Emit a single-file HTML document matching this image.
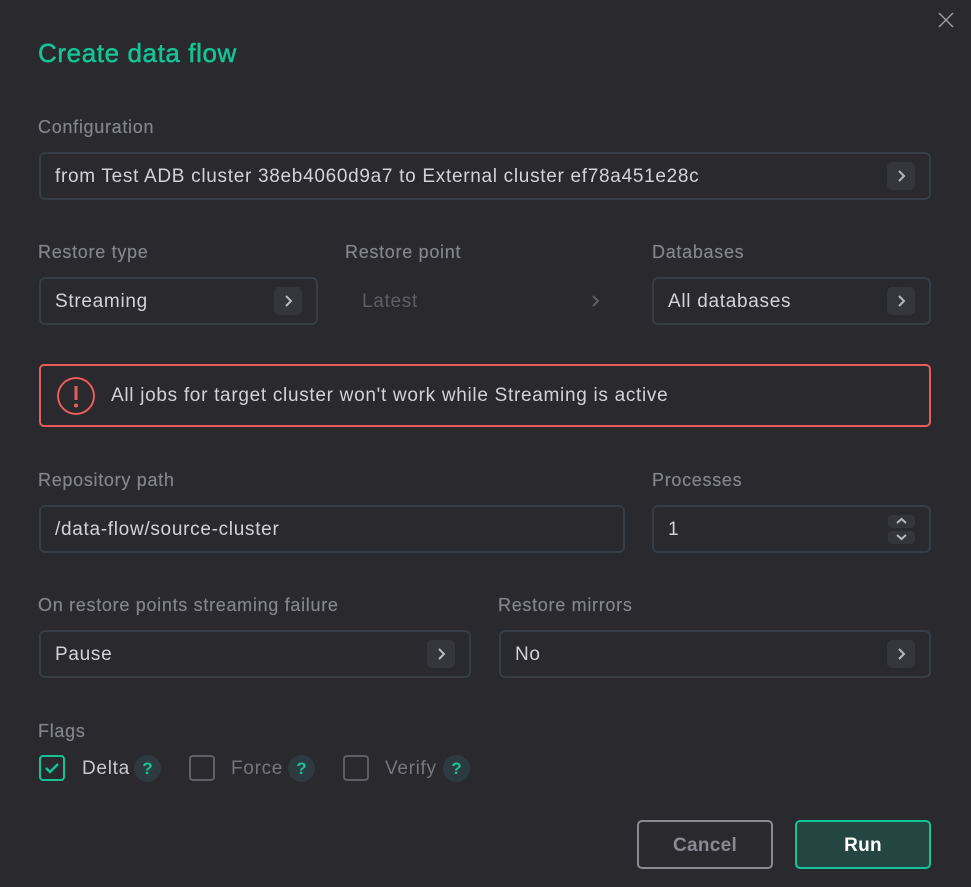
<!DOCTYPE html>
<html><head><meta charset="utf-8"><style>
*{box-sizing:border-box;margin:0;padding:0}
body{width:971px;height:887px;background:#29292e;font-family:"Liberation Sans",sans-serif;position:relative;overflow:hidden;color:#d2d2d8;letter-spacing:0.7px}
.a{position:absolute}
.lbl{position:absolute;font-size:18px;color:#83858b;line-height:20px;-webkit-text-stroke:0.2px #83858b}
.f{position:absolute;height:48px;border:2px solid #363d44;border-radius:6px;font-size:19px;line-height:46px;padding-left:14px;color:#d2d2d8}
.ch{position:absolute;right:14px;top:8px;width:28px;height:28px;background:#35363b;border-radius:5px}
.ch svg,.sp svg{position:absolute;left:0;top:0}
.cb{position:absolute;width:26px;height:26px;border:2px solid #5e5f64;border-radius:4px;top:755px}
.q{position:absolute;width:27px;height:27px;border-radius:50%;background:#2d3a40;color:#13c596;font-weight:bold;font-size:17px;text-align:center;line-height:27px;top:755px;letter-spacing:0}
.fl{position:absolute;top:758px;font-size:19px;line-height:22px;color:#76777c}
</style></head><body>
<svg class="a" style="left:937px;top:11px" width="18" height="18"><path d="M2 2L16 16M16 2L2 16" stroke="#9a9aa0" stroke-width="1.5"/></svg>
<div class="a" style="left:38px;top:38px;font-size:26px;color:#13c596;line-height:30px;letter-spacing:0.6px;-webkit-text-stroke:0.5px #13c596">Create data flow</div>

<div class="lbl" style="left:38px;top:117px">Configuration</div>
<div class="f" style="left:39px;top:152px;width:892px">from Test ADB cluster 38eb4060d9a7 to External cluster ef78a451e28c<div class="ch"><svg width="28" height="28"><path d="M12 9l5 5-5 5" fill="none" stroke="#b8b8be" stroke-width="2"/></svg></div></div>

<div class="lbl" style="left:38px;top:242px">Restore type</div>
<div class="lbl" style="left:345px;top:242px">Restore point</div>
<div class="lbl" style="left:652px;top:242px">Databases</div>
<div class="f" style="left:39px;top:277px;width:279px">Streaming<div class="ch"><svg width="28" height="28"><path d="M12 9l5 5-5 5" fill="none" stroke="#b8b8be" stroke-width="2"/></svg></div></div>
<div class="f" style="left:346px;top:277px;width:279px;border-color:transparent;color:#5e5f64">Latest<div class="ch" style="background:none"><svg width="28" height="28"><path d="M12 9l5 5-5 5" fill="none" stroke="#5e5f64" stroke-width="2"/></svg></div></div>
<div class="f" style="left:652px;top:277px;width:279px">All databases<div class="ch"><svg width="28" height="28"><path d="M12 9l5 5-5 5" fill="none" stroke="#b8b8be" stroke-width="2"/></svg></div></div>

<div class="a" style="left:39px;top:364px;width:892px;height:63px;border:2px solid #e85c5c;border-radius:5px"></div>
<svg class="a" style="left:56px;top:376px" width="40" height="40"><circle cx="20" cy="20" r="18" fill="none" stroke="#e85c5c" stroke-width="2"/><path d="M20 10v14" stroke="#e85c5c" stroke-width="3"/><circle cx="20" cy="29.5" r="2" fill="#e85c5c"/></svg>
<div class="a" style="left:111px;top:385px;font-size:19px;line-height:22px">All jobs for target cluster won't work while Streaming is active</div>

<div class="lbl" style="left:38px;top:470px">Repository path</div>
<div class="lbl" style="left:652px;top:470px">Processes</div>
<div class="f" style="left:39px;top:505px;width:586px">/data-flow/source-cluster</div>
<div class="f" style="left:652px;top:505px;width:279px">1
<div class="a" style="right:14px;top:8px;width:27px;height:13px;background:#35363b;border-radius:4px"><svg width="27" height="13" style="position:absolute;left:0;top:0"><path d="M9 8l4.5-4 4.5 4" fill="none" stroke="#b8b8be" stroke-width="2"/></svg></div>
<div class="a" style="right:14px;top:24px;width:27px;height:13px;background:#35363b;border-radius:4px"><svg width="27" height="13" style="position:absolute;left:0;top:0"><path d="M9 4l4.5 4 4.5-4" fill="none" stroke="#b8b8be" stroke-width="2"/></svg></div>
</div>

<div class="lbl" style="left:38px;top:595px">On restore points streaming failure</div>
<div class="lbl" style="left:498px;top:595px">Restore mirrors</div>
<div class="f" style="left:39px;top:630px;width:432px">Pause<div class="ch"><svg width="28" height="28"><path d="M12 9l5 5-5 5" fill="none" stroke="#b8b8be" stroke-width="2"/></svg></div></div>
<div class="f" style="left:499px;top:630px;width:432px">No<div class="ch"><svg width="28" height="28"><path d="M12 9l5 5-5 5" fill="none" stroke="#b8b8be" stroke-width="2"/></svg></div></div>

<div class="lbl" style="left:38px;top:721px">Flags</div>
<div class="cb" style="left:39px;border-color:#13c596"><svg width="22" height="22" style="position:absolute;left:0;top:0"><path d="M5 11l4 4 8-8" fill="none" stroke="#13c596" stroke-width="2.5"/></svg></div>
<div class="fl" style="left:82px;color:#c8c8ce">Delta</div>
<div class="q" style="left:134px">?</div>
<div class="cb" style="left:189px"></div>
<div class="fl" style="left:231px">Force</div>
<div class="q" style="left:288px">?</div>
<div class="cb" style="left:343px"></div>
<div class="fl" style="left:385px">Verify</div>
<div class="q" style="left:443px">?</div>

<div class="a" style="left:637px;top:820px;width:136px;height:49px;border:2px solid #8a8a92;border-radius:5px;text-align:center;line-height:47px;font-size:19px;font-weight:bold;color:#8a8a92;letter-spacing:0.3px">Cancel</div>
<div class="a" style="left:795px;top:820px;width:136px;height:49px;border:2px solid #13c596;border-radius:5px;background:#244541;text-align:center;line-height:47px;font-size:19px;font-weight:bold;color:#fff;letter-spacing:0.3px">Run</div>
</body></html>
